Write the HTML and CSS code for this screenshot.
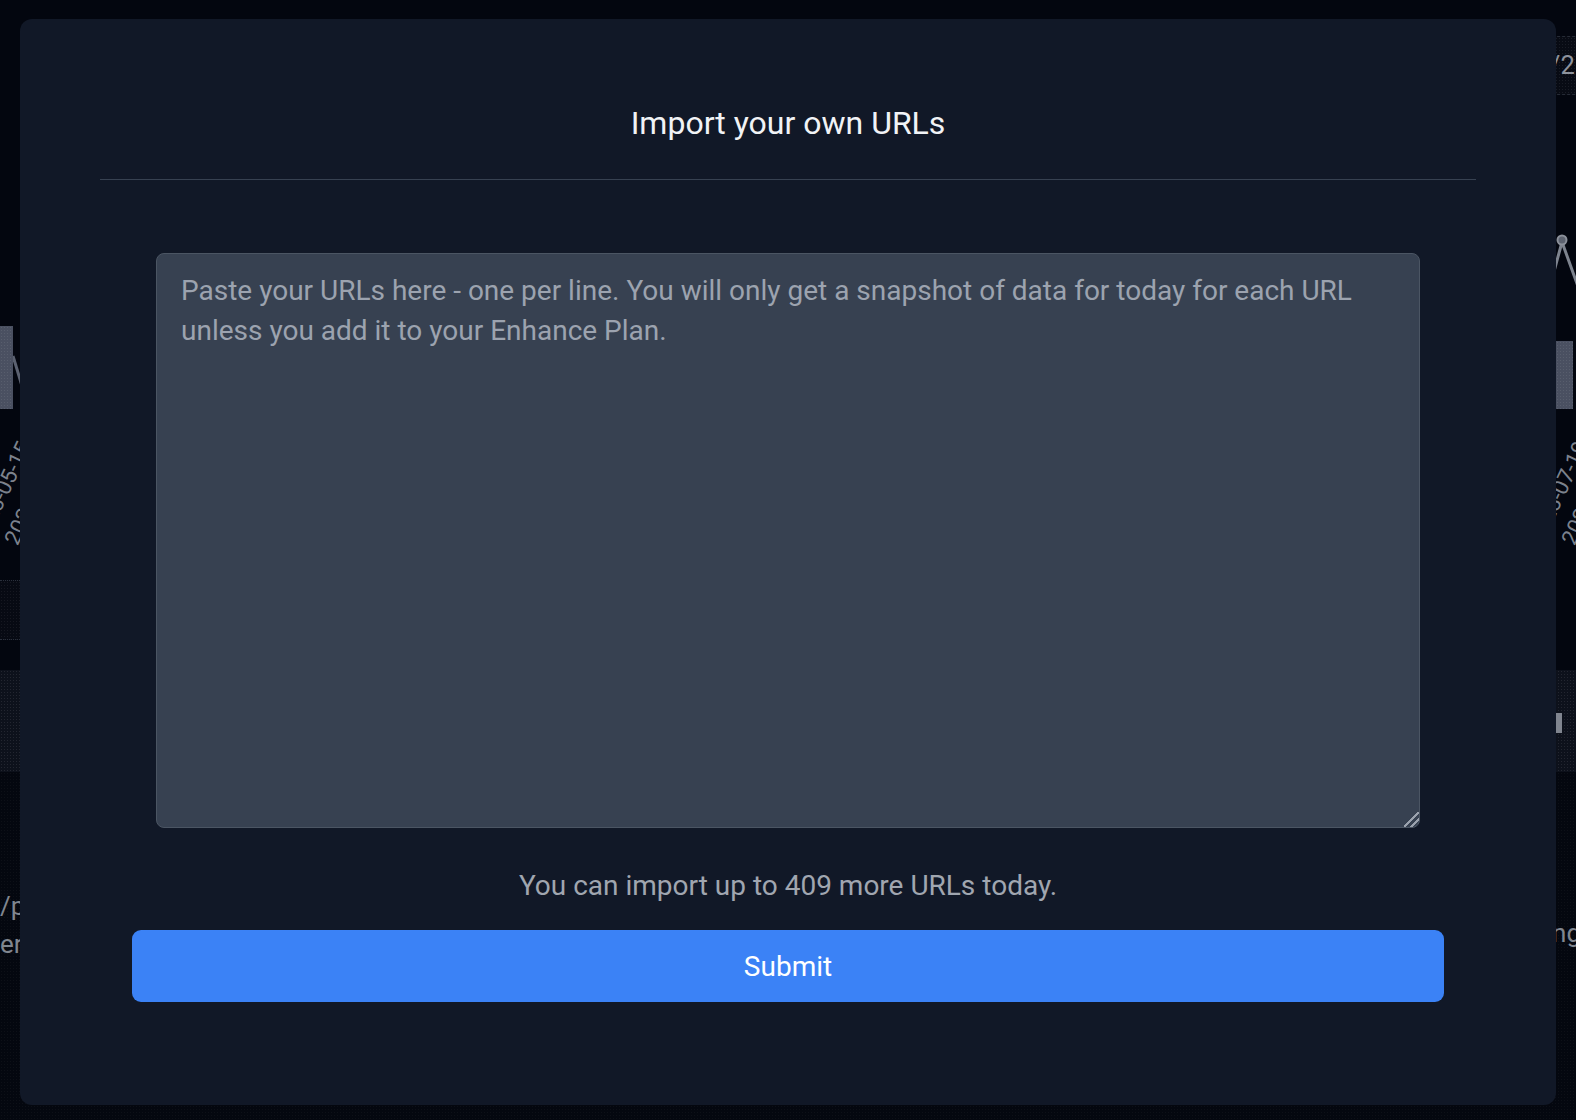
FILE: index.html
```html
<!DOCTYPE html>
<html lang="en">
<head>
<meta charset="utf-8">
<title>Import your own URLs</title>
<link rel="stylesheet" href="styles.css">
</head>
<body>
<div class="page">
  <div class="topbar">
    <div class="date-box">2023/07/21</div>
  </div>

  <div class="plot">
    <div class="plot-left">
      <div class="bar bar-left"></div>
      <svg class="trend" width="20" height="83" viewBox="0 0 20 83"><path d="M0 30 L12 70" stroke="#5b6170" stroke-width="3" fill="none"/></svg>
    </div>
    <div class="plot-right">
      <svg class="marker" width="31" height="60" viewBox="0 0 31 60"><polyline points="4,60 17,12 35,62" stroke="#7d838e" stroke-width="3" fill="none"/><circle cx="17" cy="10" r="4.5" fill="#5d6370" stroke="#8b909a" stroke-width="2"/></svg>
      <div class="bar bar-right"></div>
    </div>
  </div>

  <div class="axis">
    <div class="axis-group axis-group-left">
      <span class="tick">2023-05-15</span>
      <span class="tick">2023-05-16</span>
    </div>
    <div class="axis-group axis-group-right">
      <span class="tick">2023-07-19</span>
      <span class="tick">2023-07-20</span>
    </div>
  </div>

  <div class="band-a"><div class="band-a-cell"></div></div>

  <div class="band-b">
    <div class="band-b-cell"></div>
    <div class="band-b-cell band-b-right"><span class="mini-bar"></span></div>
  </div>

  <div class="footer">
    <div class="foot-left">
      <div>/pricing</div>
      <div>eries</div>
    </div>
    <div class="foot-right">Ranking</div>
  </div>
</div>

<div class="modal" role="dialog" aria-labelledby="modal-title">
  <h2 class="modal-title" id="modal-title">Import your own URLs</h2>
  <div class="modal-body">
    <textarea class="url-input" placeholder="Paste your URLs here - one per line. You will only get a snapshot of data for today for each URL unless you add it to your Enhance Plan."></textarea>
    <p class="quota">You can import up to 409 more URLs today.</p>
    <button class="submit-btn" type="button">Submit</button>
  </div>
</div>
</body>
</html>
```

FILE: styles.css
```css
* { box-sizing: border-box; }

html, body {
  margin: 0;
  padding: 0;
}

body {
  width: 1576px;
  height: 1120px;
  overflow: hidden;
  background: #03060f;
  font-family: Roboto, "Noto Sans", "Liberation Sans", sans-serif;
  color: #7f8590;
}

.page {
  width: 1576px;
  display: flex;
  flex-direction: column;
}

/* ---------- dimmed page behind the dialog ---------- */
.topbar {
  height: 95px;
  padding-top: 36px;
  display: flex;
  justify-content: flex-end;
  overflow: hidden;
}

.date-box {
  width: 300px;
  margin-right: -120px;
  height: 59px;
  border-top: 1px dashed #262b36;
  border-bottom: 1px dashed #262b36;
  background-color: #080b14;
  background-image: radial-gradient(rgba(255,255,255,0.07) 0.7px, transparent 0.9px);
  background-size: 3px 3px;
  padding-left: 57px;
  font-size: 25.6px;
  line-height: 57px;
  color: #8d929c;
  white-space: nowrap;
}

.plot {
  height: 314px;
  display: flex;
  justify-content: space-between;
  align-items: flex-end;
}

.plot-left {
  display: flex;
  align-items: flex-start;
  height: 83px;
}

.bar {
  background-color: #4a5061;
  background-image: radial-gradient(rgba(255,255,255,0.08) 0.7px, transparent 0.9px);
  background-size: 3px 3px;
}

.bar-left {
  width: 13px;
  height: 83px;
}

.plot-right {
  width: 40px;
  display: flex;
  flex-direction: column;
  align-items: flex-start;
}

.marker {
  display: block;
  margin-left: 9px;
  margin-bottom: 51px;
}

.bar-right {
  width: 17px;
  height: 68px;
  margin-left: 20px;
}

.axis {
  height: 171px;
  display: flex;
  justify-content: space-between;
  overflow: hidden;
}

.axis-group {
  display: flex;
  padding-top: 114px;
}

.axis-group-left { margin-left: -10px; }
.axis-group-right { margin-right: -37px; }

.tick {
  display: block;
  width: 33px;
  height: 26px;
  font-size: 22px;
  line-height: 26px;
  white-space: nowrap;
  color: #7c828d;
  transform-origin: 0 100%;
  transform: rotate(-65deg);
}

.band-a {
  height: 90px;
  padding-bottom: 30px;
}

.band-a-cell {
  width: 300px;
  height: 60px;
  border-top: 1px dotted #2a303c;
  border-bottom: 1px dotted #2a303c;
  background-color: #070a13;
  background-image: radial-gradient(rgba(255,255,255,0.06) 0.7px, transparent 0.9px);
  background-size: 3px 3px;
}

.band-b {
  height: 102px;
  display: flex;
  justify-content: space-between;
  background-color: #0d111b;
  background-image: radial-gradient(rgba(255,255,255,0.09) 0.7px, transparent 0.9px);
  background-size: 3px 3px;
}

.band-b-right {
  width: 20px;
  padding-top: 43px;
}

.mini-bar {
  display: block;
  width: 6px;
  height: 20px;
  background: #80858f;
}

.footer {
  height: 348px;
  display: flex;
  justify-content: space-between;
  align-items: flex-start;
  background-color: #04070f;
  background-image: radial-gradient(rgba(255,255,255,0.035) 0.7px, transparent 0.9px);
  background-size: 3px 3px;
  font-size: 26px;
  line-height: 38.4px;
  color: #80868f;
  overflow: hidden;
}

.foot-left {
  margin-top: 115px;
  white-space: nowrap;
}

.foot-right {
  margin-top: 142px;
  margin-right: -5px;
  white-space: nowrap;
}

/* ---------- dialog ---------- */
.modal {
  position: fixed;
  top: 19px;
  left: 20px;
  width: 1536px;
  padding: 0 80px 103px;
  background: #111827;
  border-radius: 12px;
}

.modal-title {
  margin: 0;
  padding: 84px 0 36px;
  border-bottom: 1px solid #374151;
  text-align: center;
  font-size: 32px;
  line-height: 40px;
  font-weight: 400;
  color: #f1f3f6;
}

.modal-body {
  padding: 73px 32px 0;
  display: flex;
  flex-direction: column;
}

.url-input {
  display: block;
  margin: 0 24px;
  height: 575px;
  padding: 17px 24px 13px;
  background: #374151;
  border: 1px solid #4b5563;
  border-radius: 8px;
  font-family: Roboto, "Noto Sans", "Liberation Sans", sans-serif;
  font-size: 28px;
  line-height: 40px;
  color: #e5e7eb;
  resize: vertical;
  outline: none;
}

.url-input::placeholder {
  color: #9ca3af;
  opacity: 1;
}

.url-input::-webkit-resizer {
  background: linear-gradient(135deg,
    transparent 0 46%,
    #9aa1ad 46% 54%,
    transparent 54% 70%,
    #9aa1ad 70% 78%,
    transparent 78%);
}

.quota {
  margin: 37px 0 0;
  text-align: center;
  font-size: 28px;
  line-height: 42px;
  color: #a0a6b0;
}

.submit-btn {
  margin-top: 23px;
  height: 72px;
  width: 100%;
  border: none;
  border-radius: 9px;
  background: #3b82f6;
  color: #ffffff;
  font-family: Roboto, "Noto Sans", "Liberation Sans", sans-serif;
  font-size: 28px;
  font-weight: 400;
  cursor: pointer;
}
```
